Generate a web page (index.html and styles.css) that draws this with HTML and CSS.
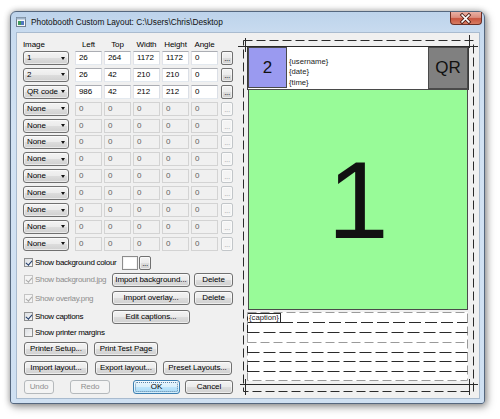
FILE: index.html
```html
<!DOCTYPE html>
<html>
<head>
<meta charset="utf-8">
<title>Photobooth Custom Layout</title>
<link rel="stylesheet" href="styles.css">
</head>
<body>
<div class="window">
  <div class="titlebar">
    <svg class="app-icon" viewBox="0 0 10 10" width="10" height="10">
      <rect x="0.5" y="0.5" width="9" height="9" fill="#f4f6f8" stroke="#6f7f8f"/>
      <rect x="0.5" y="0.5" width="9" height="2" fill="#9fb4ca"/>
      <rect x="2" y="4" width="3" height="4" fill="#3f9a5a"/>
      <rect x="5" y="4" width="3" height="4" fill="#4f78c0"/>
    </svg>
    <span class="title">Photobooth Custom Layout: C:\Users\Chris\Desktop</span>
    <div class="close">
      <svg viewBox="0 0 32 13" width="32" height="13">
        <path d="M12.5 3 L19.5 10 M19.5 3 L12.5 10" stroke="#4a1a12" stroke-width="3.4" stroke-linecap="square"/>
        <path d="M12.5 3 L19.5 10 M19.5 3 L12.5 10" stroke="#ffffff" stroke-width="1.7" stroke-linecap="square"/>
      </svg>
    </div>
  </div>
  <div class="client">
    <div class="controls">
      <div class="head">
        <span class="h-image">Image</span>
        <span class="h">Left</span>
        <span class="h">Top</span>
        <span class="h">Width</span>
        <span class="h">Height</span>
        <span class="h">Angle</span>
      </div>
      <div class="rows">
        <div class="row">
          <div class="combo"><span>1</span><i class="arrow"></i></div>
          <div class="tb">26</div><div class="tb">264</div><div class="tb">1172</div><div class="tb">1172</div><div class="tb">0</div>
          <div class="dots">...</div>
        </div>
        <div class="row">
          <div class="combo"><span>2</span><i class="arrow"></i></div>
          <div class="tb">26</div><div class="tb">42</div><div class="tb">210</div><div class="tb">210</div><div class="tb">0</div>
          <div class="dots">...</div>
        </div>
        <div class="row">
          <div class="combo"><span>QR code</span><i class="arrow"></i></div>
          <div class="tb">986</div><div class="tb">42</div><div class="tb">212</div><div class="tb">212</div><div class="tb">0</div>
          <div class="dots">...</div>
        </div>
        <div class="row off">
          <div class="combo"><span>None</span><i class="arrow"></i></div>
          <div class="tb">0</div><div class="tb">0</div><div class="tb">0</div><div class="tb">0</div><div class="tb">0</div>
          <div class="dots">...</div>
        </div>
        <div class="row off">
          <div class="combo"><span>None</span><i class="arrow"></i></div>
          <div class="tb">0</div><div class="tb">0</div><div class="tb">0</div><div class="tb">0</div><div class="tb">0</div>
          <div class="dots">...</div>
        </div>
        <div class="row off">
          <div class="combo"><span>None</span><i class="arrow"></i></div>
          <div class="tb">0</div><div class="tb">0</div><div class="tb">0</div><div class="tb">0</div><div class="tb">0</div>
          <div class="dots">...</div>
        </div>
        <div class="row off">
          <div class="combo"><span>None</span><i class="arrow"></i></div>
          <div class="tb">0</div><div class="tb">0</div><div class="tb">0</div><div class="tb">0</div><div class="tb">0</div>
          <div class="dots">...</div>
        </div>
        <div class="row off">
          <div class="combo"><span>None</span><i class="arrow"></i></div>
          <div class="tb">0</div><div class="tb">0</div><div class="tb">0</div><div class="tb">0</div><div class="tb">0</div>
          <div class="dots">...</div>
        </div>
        <div class="row off">
          <div class="combo"><span>None</span><i class="arrow"></i></div>
          <div class="tb">0</div><div class="tb">0</div><div class="tb">0</div><div class="tb">0</div><div class="tb">0</div>
          <div class="dots">...</div>
        </div>
        <div class="row off">
          <div class="combo"><span>None</span><i class="arrow"></i></div>
          <div class="tb">0</div><div class="tb">0</div><div class="tb">0</div><div class="tb">0</div><div class="tb">0</div>
          <div class="dots">...</div>
        </div>
        <div class="row off">
          <div class="combo"><span>None</span><i class="arrow"></i></div>
          <div class="tb">0</div><div class="tb">0</div><div class="tb">0</div><div class="tb">0</div><div class="tb">0</div>
          <div class="dots">...</div>
        </div>
        <div class="row off">
          <div class="combo"><span>None</span><i class="arrow"></i></div>
          <div class="tb">0</div><div class="tb">0</div><div class="tb">0</div><div class="tb">0</div><div class="tb">0</div>
          <div class="dots">...</div>
        </div>
      </div>

      <div class="opt opt-colour">
        <label class="chk-label wide"><span class="chk on"></span>Show background colour</label>
        <div class="swatch"></div>
        <div class="dots">...</div>
      </div>
      <div class="opt opt-bg">
        <label class="chk-label dis"><span class="chk on dis"></span>Show background.jpg</label>
        <div class="btn w78">Import background...</div>
        <div class="btn w39 gap4">Delete</div>
      </div>
      <div class="opt opt-ov">
        <label class="chk-label dis"><span class="chk on dis"></span>Show overlay.png</label>
        <div class="btn w78">Import overlay...</div>
        <div class="btn w39 gap4">Delete</div>
      </div>
      <div class="opt opt-cap">
        <label class="chk-label"><span class="chk on"></span>Show captions</label>
        <div class="btn w78">Edit captions...</div>
      </div>
      <div class="opt-margins">
        <label class="chk-label"><span class="chk"></span>Show printer margins</label>
      </div>
      <div class="btn-row r1">
        <div class="btn w64">Printer Setup...</div>
        <div class="btn w64 gap6">Print Test Page</div>
      </div>
      <div class="btn-row r2">
        <div class="btn w64">Import layout...</div>
        <div class="btn w62 gap7">Export layout...</div>
        <div class="btn w69 gap6">Preset Layouts...</div>
      </div>
      <div class="btn-row r3">
        <div class="btn disabled w30">Undo</div>
        <div class="btn disabled w40 gap16">Redo</div>
        <div class="btn default w47 gap23">OK</div>
        <div class="btn w48 gap5">Cancel</div>
      </div>
    </div>

    <div class="preview">
      <div class="band"></div>
      <div class="box img2">2</div>
      <div class="fields">{username}<br>{date}<br>{time}</div>
      <div class="box qr">QR</div>
      <div class="box img1">1</div>
      <div class="captions"></div>
      <div class="caption-tag">{caption}</div>
      <svg class="guides" viewBox="0 0 244 367" width="244" height="367">
        <g fill="none" stroke="#9a9a9a" stroke-width="1" stroke-dasharray="9 4">
          <rect x="11.5" y="280.5" width="220" height="68"/>
          <line x1="11.5" y1="310.5" x2="231.5" y2="310.5"/>
        </g>
        <g fill="none" stroke="#2a2a2a" stroke-width="1" stroke-dasharray="12 4">
          <line x1="45" y1="290.5" x2="231.5" y2="290.5"/>
          <line x1="11.5" y1="300.5" x2="231.5" y2="300.5"/>
          <line x1="11.5" y1="320.5" x2="231.5" y2="320.5"/>
          <line x1="11.5" y1="329.5" x2="231.5" y2="329.5"/>
          <line x1="11.5" y1="339.5" x2="231.5" y2="339.5"/>
        </g>
        <g stroke="#2a2a2a" stroke-width="1">
          <line x1="11.5" y1="293" x2="11.5" y2="301"/>
          <line x1="11.5" y1="314" x2="11.5" y2="321"/>
          <line x1="11.5" y1="333" x2="11.5" y2="340"/>
        </g>
        <rect x="7.5" y="8.5" width="230" height="351" fill="none" stroke="#2a2a2a" stroke-width="1" stroke-dasharray="9 4"/>
        <g stroke="#2a2a2a" stroke-width="1">
          <line x1="2" y1="14.5" x2="242" y2="14.5"/>
          <line x1="4" y1="352.5" x2="242" y2="352.5"/>
          <line x1="9.5" y1="6" x2="9.5" y2="20"/>
          <line x1="233.5" y1="3" x2="233.5" y2="16"/>
          <line x1="9.5" y1="347" x2="9.5" y2="363"/>
          <line x1="233.5" y1="347" x2="233.5" y2="363"/>
        </g>
      </svg>
    </div>
  </div>
</div>
</body>
</html>
```

FILE: styles.css
```css
* { box-sizing: border-box; }

html, body {
  margin: 0;
  padding: 0;
}

body {
  width: 500px;
  height: 419px;
  overflow: hidden;
  background: #ffffff;
  font-family: "Liberation Sans", Arial, sans-serif;
  font-size: 8px;
  letter-spacing: -0.1px;
  color: #000;
}

/* ---------- window frame ---------- */
.window {
  margin: 11px 0 0 10px;
  width: 475px;
  height: 393px;
  border: 1px solid #55677e;
  border-radius: 6px 6px 3px 3px;
  padding: 0 4px 4px 5px;
  display: flex;
  flex-direction: column;
  background: linear-gradient(180deg, #bdd3eb 0px, #c8dbef 20px, #d2e2f3 120px, #cfe0f2 100%);
  box-shadow: 0 0 6px rgba(0, 0, 0, 0.3), 2px 3px 9px rgba(0, 0, 0, 0.35);
}

.titlebar {
  height: 20px;
  flex: none;
  display: flex;
  align-items: flex-start;
}

.app-icon {
  flex: none;
  margin-top: 5px;
}

.title {
  flex: 1;
  margin-left: 5px;
  font-size: 8.3px;
  letter-spacing: 0;
  line-height: 20px;
  color: #101010;
  white-space: nowrap;
}

.close {
  flex: none;
  width: 32px;
  height: 13px;
  margin-right: -2px;
  border: 1px solid #6b2f25;
  border-top: none;
  border-radius: 0 0 4px 4px;
  background: linear-gradient(180deg, #e9b0a4 0%, #dc8e7e 45%, #c9553f 55%, #d77d62 100%);
  display: flex;
  align-items: center;
  justify-content: center;
}

.close svg {
  display: block;
  margin-left: -1px;
}

/* ---------- client ---------- */
.client {
  flex: 1;
  display: flex;
  background: #f0f0f0;
  box-shadow: inset 0 0 0 1px #a9bbcf;
}

.controls {
  width: 220px;
  flex: none;
  padding: 7.5px 0 0 7px;
}

.head {
  display: flex;
  height: 10px;
  line-height: 10px;
  margin-bottom: 1.5px;
}

.h-image {
  width: 52px;
}

.h {
  width: 27px;
  margin-right: 2px;
  text-align: center;
}

.rows {
  display: flex;
  flex-direction: column;
  gap: 2.9px;
}

.row {
  display: flex;
  height: 14px;
}

.combo {
  width: 46px;
  height: 14px;
  margin-right: 6px;
  border: 1px solid #707070;
  border-radius: 3px;
  background: linear-gradient(180deg, #f3f3f3 0%, #ebebeb 50%, #dddddd 50%, #d0d0d0 100%);
  box-shadow: inset 0 0 0 1px rgba(255, 255, 255, 0.55);
  display: flex;
  align-items: center;
  justify-content: space-between;
  padding: 0 3px 0 3px;
  line-height: 12px;
}

.arrow {
  width: 0;
  height: 0;
  border-left: 2.5px solid transparent;
  border-right: 2.5px solid transparent;
  border-top: 3px solid #111;
}

.tb {
  width: 27px;
  height: 14px;
  margin-right: 2px;
  background: #fff;
  border: 1px solid;
  border-color: #abadb3 #dbdfe6 #e3e9ef #e2e3ea;
  padding-left: 3px;
  line-height: 12px;
}

.dots {
  width: 12px;
  height: 14px;
  margin-left: 1px;
  border: 1px solid #707070;
  border-radius: 2px;
  background: linear-gradient(180deg, #f3f3f3 0%, #ebebeb 50%, #dddddd 50%, #d0d0d0 100%);
  box-shadow: inset 0 0 0 1px rgba(255, 255, 255, 0.55);
  text-align: center;
  line-height: 14px;
  letter-spacing: -0.4px;
  font-size: 8px;
}

.row.off .tb {
  background: #f0f0f0;
  border-color: #d3d3d3;
  color: #5e5e5e;
}

.row.off .dots {
  border-color: #c2c6c9;
  background: #f4f4f4;
  color: #a9a9a9;
}

/* ---------- options ---------- */
.opt {
  display: flex;
  height: 14px;
  align-items: center;
}

.opt-colour { margin-top: 5px; }
.opt-bg { margin-top: 3px; }
.opt-ov { margin-top: 4.5px; }
.opt-cap { margin-top: 4.5px; }

.opt-margins {
  margin-top: 4px;
  height: 10px;
  display: flex;
  align-items: center;
}

.chk-label {
  width: 89px;
  flex: none;
  display: flex;
  align-items: center;
  padding-left: 1px;
  white-space: nowrap;
  letter-spacing: -0.3px;
}

.chk-label.wide { width: 99px; }

.chk-label.dis { color: #8d8d8d; }

.chk {
  width: 9px;
  height: 9px;
  flex: none;
  margin-right: 2px;
  border: 1px solid #8e8f8f;
  background: linear-gradient(135deg, #dcdfe3 0%, #f7f7f7 100%);
  position: relative;
}

.chk.on::after {
  content: "";
  position: absolute;
  left: 2px;
  top: 0px;
  width: 2.5px;
  height: 5px;
  border: solid #1e3a6a;
  border-width: 0 1.5px 1.5px 0;
  transform: rotate(40deg);
}

.chk.dis {
  border-color: #c4c4c4;
  background: #f4f4f4;
}

.chk.dis.on::after { border-color: #a8a8a8; }

.swatch {
  width: 16px;
  height: 14px;
  background: #fff;
  border: 1px solid #8c8c8c;
  box-shadow: inset 0 0 0 1px #f4f4f4;
}

/* ---------- buttons ---------- */
.btn {
  height: 14px;
  flex: none;
  border: 1px solid #707070;
  border-radius: 3px;
  background: linear-gradient(180deg, #f3f3f3 0%, #ebebeb 50%, #dddddd 50%, #d0d0d0 100%);
  box-shadow: inset 0 0 0 1px rgba(255, 255, 255, 0.6);
  text-align: center;
  line-height: 12px;
  white-space: nowrap;
}

.btn.disabled {
  border-color: #b5b9bc;
  background: #f4f4f4;
  color: #8f8f8f;
  box-shadow: none;
}

.btn.default {
  border-color: #3c7fb1;
  background: linear-gradient(180deg, #eaf6fd 0%, #d9f0fc 50%, #bee6fd 50%, #a7d9f5 100%);
  box-shadow: inset 0 0 0 1px rgba(255, 255, 255, 0.5);
  position: relative;
}

.btn.default::after {
  content: "";
  position: absolute;
  inset: 1px;
  border: 1px dotted #5f86a8;
  border-radius: 2px;
}

.w30 { width: 30px; }
.w39 { width: 39px; }
.w40 { width: 40px; }
.w47 { width: 47px; }
.w48 { width: 48px; }
.w62 { width: 62px; }
.w64 { width: 64px; }
.w69 { width: 69px; }
.w78 { width: 78px; }

.gap4 { margin-left: 4px; }
.gap5 { margin-left: 5px; }
.gap6 { margin-left: 6px; }
.gap7 { margin-left: 7px; }
.gap16 { margin-left: 16px; }
.gap23 { margin-left: 23px; }

.btn-row {
  display: flex;
  height: 14px;
  padding-left: 1px;
}

.btn-row.r1 { margin-top: 4.5px; }
.btn-row.r2 { margin-top: 5px; }
.btn-row.r3 { margin-top: 4.5px; }

/* ---------- preview canvas ---------- */
.preview {
  flex: 1;
  position: relative;
}

.band {
  position: absolute;
  left: 11px;
  top: 14px;
  width: 222px;
  height: 44px;
  background: #fff;
  border: 1px solid #3a3a3a;
}

.box {
  position: absolute;
  border: 1px solid #4a4a4a;
  display: flex;
  align-items: center;
  justify-content: center;
  letter-spacing: 0;
  color: #111;
}

.img2 {
  left: 12px;
  top: 15px;
  width: 39px;
  height: 41px;
  background: #9a9af0;
  font-size: 17px;
}

.qr {
  left: 192px;
  top: 15px;
  width: 40px;
  height: 42px;
  background: #808080;
  font-size: 17px;
}

.img1 {
  left: 12px;
  top: 57px;
  width: 220px;
  height: 221px;
  background: #98fb98;
  font-size: 110px;
  line-height: 1;
}

.fields {
  position: absolute;
  left: 53px;
  top: 25px;
  font-size: 7.7px;
  line-height: 10.3px;
  letter-spacing: 0;
  color: #222;
}

.captions {
  position: absolute;
  left: 11px;
  top: 280px;
  width: 221px;
  height: 69px;
  background: #fff;
}

.caption-tag {
  position: absolute;
  left: 11px;
  top: 281px;
  height: 10px;
  padding: 0 1px;
  border: 1px solid #2a2a2a;
  font-size: 7.7px;
  line-height: 8px;
  letter-spacing: 0;
  color: #222;
}

.guides {
  position: absolute;
  left: 0;
  top: 0;
  pointer-events: none;
}
```
